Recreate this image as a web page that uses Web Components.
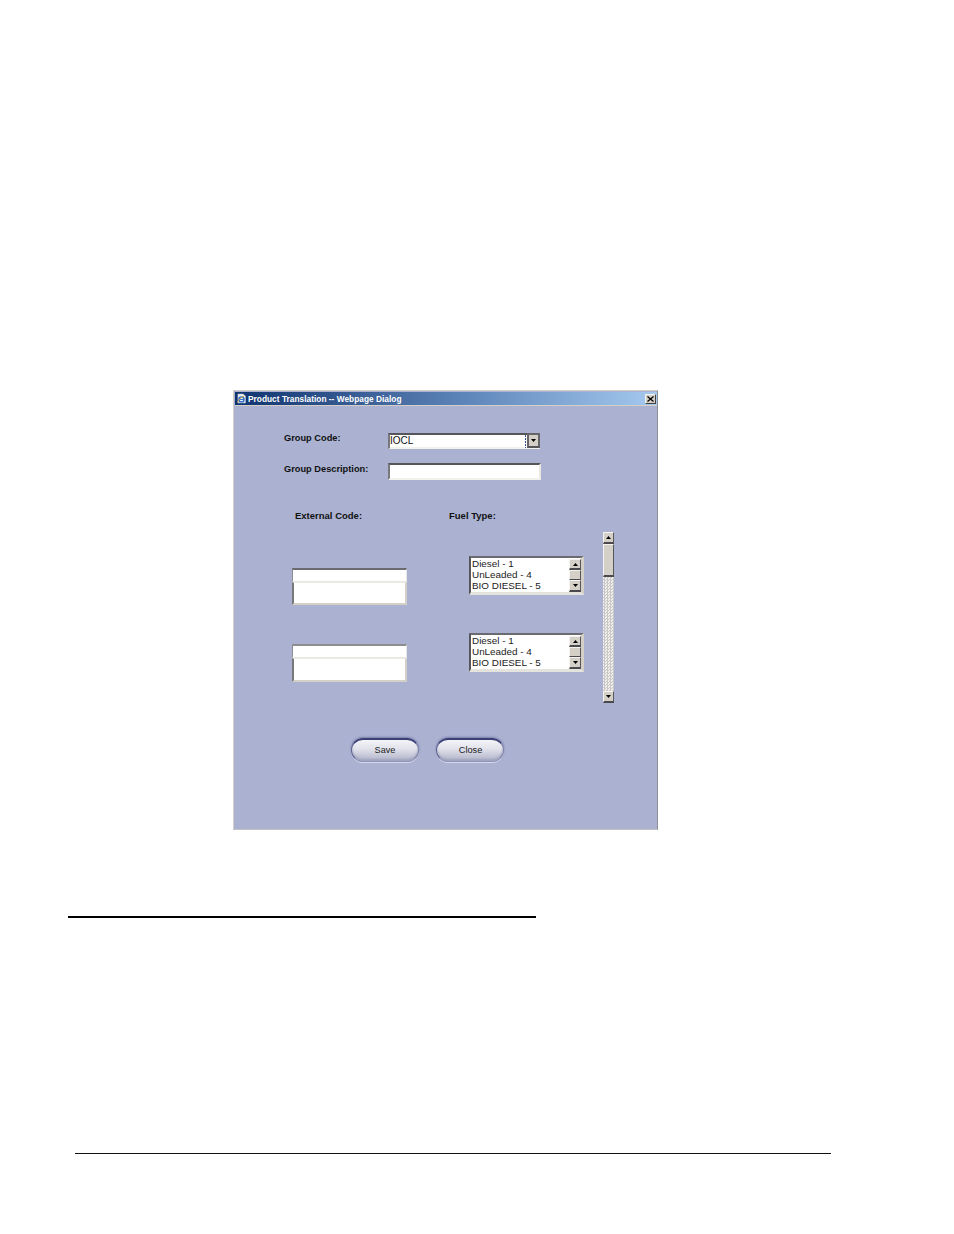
<!DOCTYPE html>
<html>
<head>
<meta charset="utf-8">
<title>Product Translation</title>
<style>
  html, body { margin: 0; background: #fff; }
  body { width: 954px; height: 1234px; overflow: hidden; font-family: "Liberation Sans", Arial, sans-serif; }
</style>
</head>
<body>
<doc-page>
  <app-dialog heading="Product Translation -- Webpage Dialog">
    <form-row label="Group Code:" gap="13"><combo-box value="IOCL"></combo-box></form-row>
    <form-row label="Group Description:" gap="14" nudge="1"><text-box></text-box></form-row>
    <translation-table>
      <code-box slot="left"></code-box>
      <code-box slot="left" second></code-box>
      <list-box slot="right"></list-box>
      <list-box slot="right"></list-box>
    </translation-table>
    <div slot="actions">
      <pill-button>Save</pill-button>
      <pill-button>Close</pill-button>
    </div>
  </app-dialog>
</doc-page>

<script>
const sunken = `
  border-style: solid;
  border-width: 2px;
  border-color: #55555a #e9e8e2 #f2f1ec #77777c;
  background: #fff;
  box-sizing: border-box;
`;

const scrollBtn = `
  width: 11px; height: 12px; box-sizing: border-box;
  background: #d4d0c8;
  border-style: solid;
  border-width: 1px 1px 2px 1px;
  border-color: #f4f3ef #55555a #4a4a4e #f4f3ef;
  display: flex; align-items: center; justify-content: center;
`;

const upArrow = '<svg width="5" height="3" viewBox="0 0 5 3"><path d="M2.5 0L5 3H0Z" fill="#000"/></svg>';
const downArrow = '<svg width="5" height="3" viewBox="0 0 5 3"><path d="M0 0H5L2.5 3Z" fill="#000"/></svg>';

class DocPage extends HTMLElement {
  constructor() {
    super();
    this.attachShadow({mode: 'open'}).innerHTML = `
      <style>
        :host { display: block; padding-top: 390px; }
        .dlg { margin-left: 233px; }
        .rule1 { margin: 86px 0 0 68px; width: 468px; height: 2px; background: #000; }
        .rule2 { margin: 235px 0 0 75px; width: 756px; height: 1px; background: #111; }
      </style>
      <div class="dlg"><slot></slot></div>
      <div class="rule1"></div>
      <div class="rule2"></div>
    `;
  }
}

class AppDialog extends HTMLElement {
  constructor() {
    super();
    const heading = this.getAttribute('heading');
    this.attachShadow({mode: 'open'}).innerHTML = `
      <style>
        :host { display: block; width: 425px; height: 440px; box-sizing: border-box;
          border: 1px solid #d4d0c8; border-right-color: #8f8f95; border-bottom-color: #c4c3c4; background: #aab1d1; }
        .bar { height: 13px; margin: 1px 0 0 1px; padding: 0 1px 0 2px; display: flex; align-items: center; gap: 2px;
          background: linear-gradient(90deg, #10346f 0%, #33578f 25%, #5f86ba 55%, #a5c9ef 100%);
          border-bottom: 1px solid #d4d0c8; }
        .title { color: #fff; font: bold 8.3px/11px "Liberation Sans", Arial, sans-serif; padding-top: 1px; letter-spacing: .03px; white-space: nowrap; flex: 1; }
        .close { width: 11px; height: 10px; background: #d4d0c8; box-sizing: border-box;
          border: 1px solid; border-color: #f4f3ef #404040 #404040 #f4f3ef; display: flex; align-items: center; justify-content: center; }
        .body { padding: 27px 0 0 50px; display: flex; flex-direction: column; }
        svg { display: block; flex: none; }
      </style>
      <div class="bar">
        <svg width="9" height="11" viewBox="0 0 10 11">
          <path d="M1 .5H7L9.5 3V10.5H1Z" fill="#eef0f4" stroke="#aab2c2" stroke-width=".6"/>
          <circle cx="5" cy="6.5" r="2.8" fill="#dfeaf7" stroke="#2a68c8" stroke-width="1.5"/>
          <path d="M2.6 6.6H7.6" stroke="#2a68c8" stroke-width="1"/>
          <path d="M.6 9.6C2 7 5 3.6 8 3" fill="none" stroke="#e0a81e" stroke-width="1"/>
        </svg>
        <span class="title">${heading}</span>
        <span class="close">
          <svg width="7" height="6" viewBox="0 0 7 6"><path d="M.5 .5L6.5 5.5M6.5 .5L.5 5.5" stroke="#000" stroke-width="1.3"/></svg>
        </span>
      </div>
      <div class="body">
        <slot></slot>
        <slot name="actions"></slot>
      </div>
    `;
  }
  connectedCallback() {
    const actions = this.querySelector('[slot=actions]');
    actions.style.cssText = 'display:flex;gap:17px;margin:35px 0 0 67px;';
  }
}

class FormRow extends HTMLElement {
  constructor() {
    super();
    const gap = this.getAttribute('gap');
    const nudge = this.getAttribute('nudge') || 0;
    this.attachShadow({mode: 'open'}).innerHTML = `
      <style>
        :host { display: flex; align-items: flex-start; height: ${+gap + 17}px; }
        label { width: 104px; font: bold 9.25px/11px "Liberation Sans", Arial, sans-serif; color: #111; padding-top: ${nudge}px; white-space: nowrap; }
      </style>
      <label>${this.getAttribute('label')}</label>
      <slot></slot>
    `;
  }
}

class ComboBox extends HTMLElement {
  constructor() {
    super();
    this.attachShadow({mode: 'open'}).innerHTML = `
      <style>
        :host { display: flex; width: 152px; height: 16px; margin-bottom: 1px; box-sizing: border-box; ${sunken} border-right: 0; border-bottom-width: 1px; }
        .val { flex: 1; font: 10px/12px "Liberation Sans", Arial, sans-serif; color: #111; border-bottom: 1px solid #f2f1ec; }
        .sep { width: 1px; margin: 0 1px; background: repeating-linear-gradient(180deg, #34508c 0 2px, #fff 2px 3px); }
        .arrow { width: 13px; height: 15px; margin-top: -2px; box-sizing: border-box; background: #d4d0c8;
          border: 2px solid #66666a; border-bottom-color: #55555a; display: flex; align-items: center; justify-content: center; }
      </style>
      <span class="val">${this.getAttribute('value')}</span>
      <span class="sep"></span>
      <span class="arrow">${downArrow}</span>
    `;
  }
}

class TextBox extends HTMLElement {
  constructor() {
    super();
    this.attachShadow({mode: 'open'}).innerHTML = `
      <style>:host { display: block; width: 153px; height: 17px; ${sunken} }</style>
    `;
  }
}

class TranslationTable extends HTMLElement {
  constructor() {
    super();
    this.attachShadow({mode: 'open'}).innerHTML = `
      <style>
        :host { display: grid; grid-template-columns: 157px 154px 11px; margin: 16px 0 0 8px; }
        .lab { font: bold 9.5px/11px "Liberation Sans", Arial, sans-serif; color: #111; white-space: nowrap; }
        .a { padding: 0 0 0 3px; }
        .head { height: 11px; }
        .left { display: flex; flex-direction: column; gap: 39px; margin-top: 47px; }
        .right { display: flex; flex-direction: column; gap: 38px; margin: 35px 0 0 20px; }
        .sb { margin-top: 11px; }
      </style>
      <div class="head lab a">External Code:</div>
      <div class="head lab">Fuel Type:</div>
      <div class="head"></div>
      <div class="left"><slot name="left"></slot></div>
      <div class="right"><slot name="right"></slot></div>
      <div class="sb"><v-scrollbar></v-scrollbar></div>
    `;
  }
}

class CodeBox extends HTMLElement {
  constructor() {
    super();
    const second = this.hasAttribute('second');
    const top = second ? '#8d8d90' : '#6a6a70';
    this.attachShadow({mode: 'open'}).innerHTML = `
      <style>
        :host { display: block; width: 115px; box-sizing: border-box; }
        .one { height: 14px; box-sizing: border-box; background: #fff; border: 1px solid #e8e6e0; border-top: 2px solid ${top}; border-left: 1px solid #8d8d90; }
        .two { height: ${second ? 24 : 23}px; box-sizing: border-box; background: #fff; border-style: solid; border-width: 1px 2px 2px 2px;
          border-color: #ecebe6 #d4d0c8 #d4d0c8 #77777c; }
      </style>
      <div class="one"></div>
      <div class="two"></div>
    `;
  }
}

class ListBox extends HTMLElement {
  constructor() {
    super();
    this.attachShadow({mode: 'open'}).innerHTML = `
      <style>
        :host { display: flex; width: 115px; height: 39px; box-sizing: border-box; background: #fff;
          border-style: solid; border-width: 2px 3px 3px 2px; border-color: #6a6a70 #d4d0c8 #e4e3dd #55555a; }
        ul { flex: 1; margin: 0; padding: 0 0 0 1px; list-style: none; font: 9.9px/11px "Liberation Sans", Arial, sans-serif; color: #222; }
        li { height: 11px; white-space: nowrap; }
        .track { width: 12px; display: flex; flex-direction: column; margin-top: 1px; }
        .b { ${scrollBtn} width: 12px; flex: none; }
        .b.up { height: 11px; }
        .b.thumb { height: 10px; border-bottom-width: 1px; }
        .b.down { height: 12px; }
      </style>
      <ul><li>Diesel - 1</li><li>UnLeaded - 4</li><li>BIO DIESEL - 5</li></ul>
      <div class="track">
        <span class="b up">${upArrow}</span>
        <span class="b thumb"></span>
        <span class="b down">${downArrow}</span>
      </div>
    `;
  }
}

class VScrollbar extends HTMLElement {
  constructor() {
    super();
    this.attachShadow({mode: 'open'}).innerHTML = `
      <style>
        :host { display: flex; flex-direction: column; width: 11px; height: 171px;
          background: repeating-conic-gradient(#c9c8c6 0% 25%, #f0efee 0% 50%) 0 0 / 3px 3px; }
        .b { ${scrollBtn} flex: none; }
        .thumb { ${scrollBtn} height: 33px; flex: none; }
        .sp { flex: 1; }
      </style>
      <span class="b">${upArrow}</span>
      <span class="thumb"></span>
      <span class="sp"></span>
      <span class="b">${downArrow}</span>
    `;
  }
}

class PillButton extends HTMLElement {
  constructor() {
    super();
    this.attachShadow({mode: 'open'}).innerHTML = `
      <style>
        :host { display: block; width: 68px; height: 24px; box-sizing: border-box; border-radius: 12px;
          border: 1px solid #5f6390; border-top: 2px solid #3c4076; border-right-color: #7d81a6; border-bottom-color: #8e92b4;
          background: linear-gradient(180deg, #f4f4f8 0%, #e2e3ec 40%, #b0b3c9 100%);
          box-shadow: 0 -1px 2px #7b7fa8, 0 1px 0 #dfe1ef, inset 0 -2px 2px #a2a5bf;
          font: 9.2px/21px "Liberation Sans", Arial, sans-serif; color: #222; text-align: center; }
        :host(:last-child) { text-indent: 1px; }
      </style>
      <slot></slot>
    `;
  }
}

customElements.define('doc-page', DocPage);
customElements.define('app-dialog', AppDialog);
customElements.define('form-row', FormRow);
customElements.define('combo-box', ComboBox);
customElements.define('text-box', TextBox);
customElements.define('translation-table', TranslationTable);
customElements.define('code-box', CodeBox);
customElements.define('list-box', ListBox);
customElements.define('v-scrollbar', VScrollbar);
customElements.define('pill-button', PillButton);
</script>
</body>
</html>
